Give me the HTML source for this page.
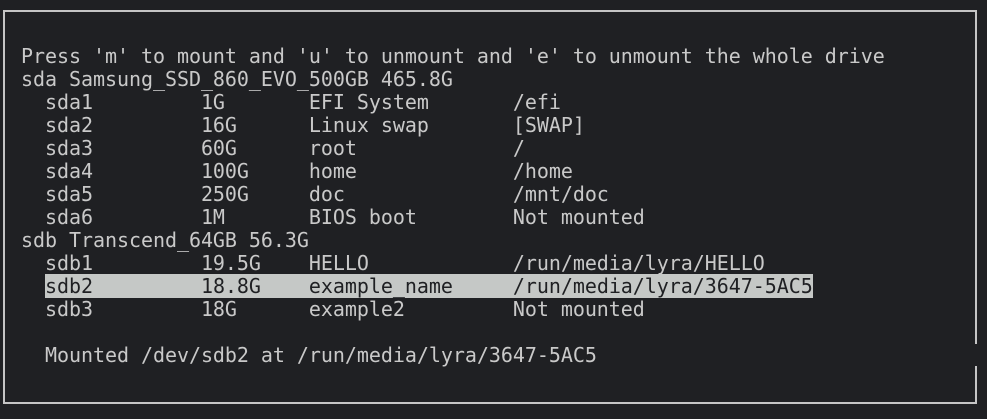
<!DOCTYPE html>
<html><head><style>
html,body{margin:0;padding:0;background:#1f2023;width:987px;height:419px;overflow:hidden}
.b{position:absolute;left:3px;top:10px;width:970px;height:390px;border:2px solid #c5c5c5;}
.gap{position:absolute;left:972px;top:344px;width:6px;height:22px;background:#1f2023}
pre{position:absolute;left:21px;top:45px;margin:0;font-family:"DejaVu Sans Mono","Liberation Mono",monospace;font-size:20px;line-height:23px;color:#c9c9c9;letter-spacing:-0.045px}
.h{background:#c5c8c6;color:#1f2023}
</style></head><body>
<div class="b"></div><div class="gap"></div>
<pre>Press 'm' to mount and 'u' to unmount and 'e' to unmount the whole drive
sda Samsung_SSD_860_EVO_500GB 465.8G
  sda1         1G       EFI System       /efi
  sda2         16G      Linux swap       [SWAP]
  sda3         60G      root             /
  sda4         100G     home             /home
  sda5         250G     doc              /mnt/doc
  sda6         1M       BIOS boot        Not mounted
sdb Transcend_64GB 56.3G
  sdb1         19.5G    HELLO            /run/media/lyra/HELLO
  <span class="h">sdb2         18.8G    example_name     /run/media/lyra/3647-5AC5</span>
  sdb3         18G      example2         Not mounted

  Mounted /dev/sdb2 at /run/media/lyra/3647-5AC5</pre>
</body></html>
